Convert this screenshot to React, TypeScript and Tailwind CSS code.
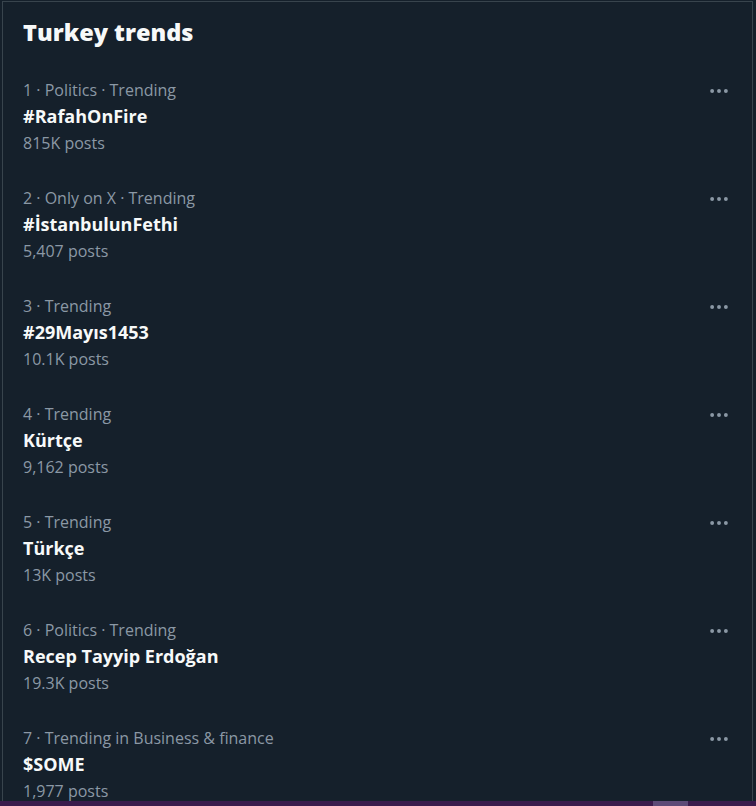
const trends = [
  { meta: "1 · Politics · Trending", name: "#RafahOnFire", posts: "815K posts" },
  { meta: "2 · Only on X · Trending", name: "#İstanbulunFethi", posts: "5,407 posts" },
  { meta: "3 · Trending", name: "#29Mayıs1453", posts: "10.1K posts" },
  { meta: "4 · Trending", name: "Kürtçe", posts: "9,162 posts" },
  { meta: "5 · Trending", name: "Türkçe", posts: "13K posts" },
  { meta: "6 · Politics · Trending", name: "Recep Tayyip Erdoğan", posts: "19.3K posts" },
  { meta: "7 · Trending in Business & finance", name: "$SOME", posts: "1,977 posts" },
];

function MoreIcon() {
  return (
    <svg viewBox="0 0 24 24" className="w-[22px] h-[22px]" fill="#8b98a5">
      <circle cx="4.5" cy="12" r="2.1" />
      <circle cx="12" cy="12" r="2.1" />
      <circle cx="19.5" cy="12" r="2.1" />
    </svg>
  );
}

export default function App() {
  return (
    <div
      className="w-[756px] h-[806px] bg-[#15202b] overflow-hidden flex flex-col"
      style={{ fontFamily: '"Open Sans", "Noto Sans", sans-serif' }}
    >
      <div className="flex-1 min-h-0 ml-[2px] mr-[3px] mt-[1px] border-t border-l border-r border-[#38444d] overflow-hidden">
        {/* Header */}
        <div className="px-[20px] pt-[17px] pb-[19px]">
          <h2 className="text-[23.5px] leading-[26px] font-extrabold text-[#f7f9f9]">Turkey trends</h2>
        </div>

        {/* Trend list */}
        {trends.map((t) => (
          <div key={t.name} className="h-[108px] px-[20px] py-[13px] flex justify-between">
            <div className="flex flex-col">
              <span className="text-[16px] leading-[26px] text-[#8b98a5]">{t.meta}</span>
              <span className="text-[18px] leading-[26px] font-bold text-[#f7f9f9]">{t.name}</span>
              <span className="mt-[1px] text-[16px] leading-[27px] text-[#8b98a5]">{t.posts}</span>
            </div>
            <div className="pt-[3px] pr-[2px]">
              <MoreIcon />
            </div>
          </div>
        ))}
      </div>

      {/* Bottom strip */}
      <div className="h-[5px] bg-[#3a1b4c] flex">
        <div className="w-[653px]" />
        <div className="w-[35px] bg-[#5d4a77]" />
      </div>
    </div>
  );
}
